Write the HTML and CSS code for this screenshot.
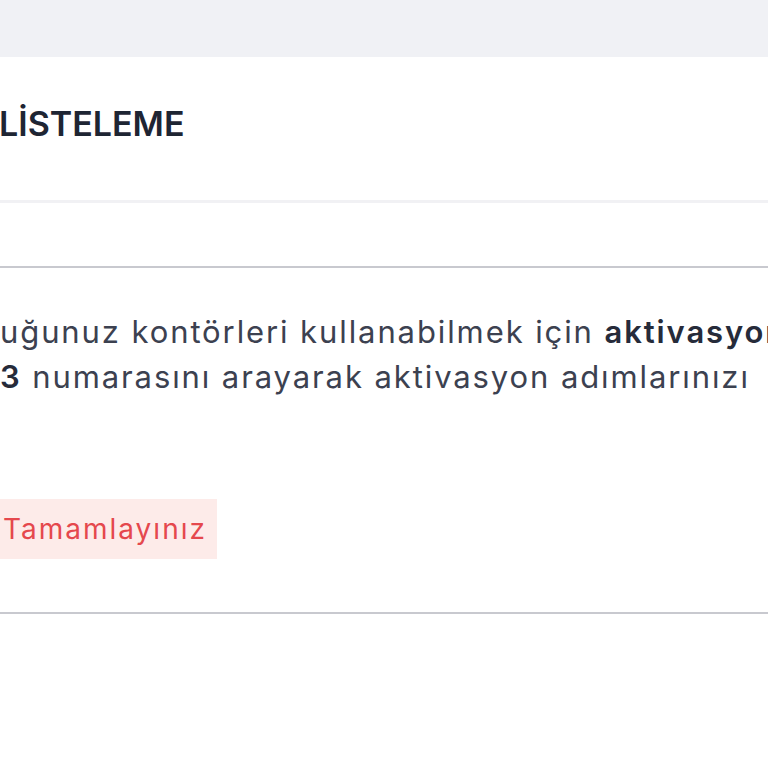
FILE: index.html
```html
<!DOCTYPE html>
<html lang="tr">
<head>
<meta charset="utf-8">
<title>Listeleme</title>
<link rel="stylesheet" href="styles.css">
</head>
<body>
<div class="page">
  <div class="topbar"></div>
  <div class="card">
    <div class="card-header">
      <h1 class="title">LİSTELEME</h1>
    </div>
    <div class="toolbar"></div>
    <div class="notice">
      <p class="notice-text"><span class="line">uğunuz kontörleri kullanabilmek için <b>aktivasyon</b></span><span class="line"><b>3</b> numarasını arayarak aktivasyon adımlarınızı</span></p>
      <div class="actions">
        <a class="btn-danger">Tamamlayınız</a>
      </div>
    </div>
  </div>
</div>
</body>
</html>
```

FILE: styles.css
```css
html, body {
  margin: 0;
  padding: 0;
  background: #ffffff;
  overflow: hidden;
}
.page {
  width: 768px;
  height: 768px;
  overflow: hidden;
  font-family: Inter, "Noto Sans", sans-serif;
}
.topbar {
  height: 57px;
  background: #f0f1f5;
}
.card {
  background: #ffffff;
}
.card-header {
  display: flex;
  align-items: center;
  border-bottom: 3px solid #f1f1f4;
  box-sizing: border-box;
  height: 146px;
  padding-bottom: 10px;
}
.title {
  margin: 0 0 0 -1px;
  font-size: 34px;
  font-weight: 600;
  color: #1e2533;
  line-height: 1;
}
.toolbar {
  height: 63px;
  border-bottom: 2px solid #c8c9cf;
}
.notice {
  border-bottom: 2px solid #c8c9cf;
  height: 346px;
  box-sizing: border-box;
  padding-top: 41px;
}
.notice-text {
  margin: 0;
  font-size: 31px;
  letter-spacing: 1.9px;
  line-height: 45px;
  color: #3c4150;
  white-space: nowrap;
}
.notice-text b {
  font-weight: 600;
  color: #262b3a;
}
.line {
  display: block;
}
.actions {
  margin-top: 100px;
  display: flex;
}
.btn-danger {
  display: flex;
  align-items: center;
  height: 60px;
  padding: 0 10px 0 3px;
  background: #fdebe9;
  color: #e5484d;
  font-size: 28px;
  letter-spacing: 2px;
}
```
